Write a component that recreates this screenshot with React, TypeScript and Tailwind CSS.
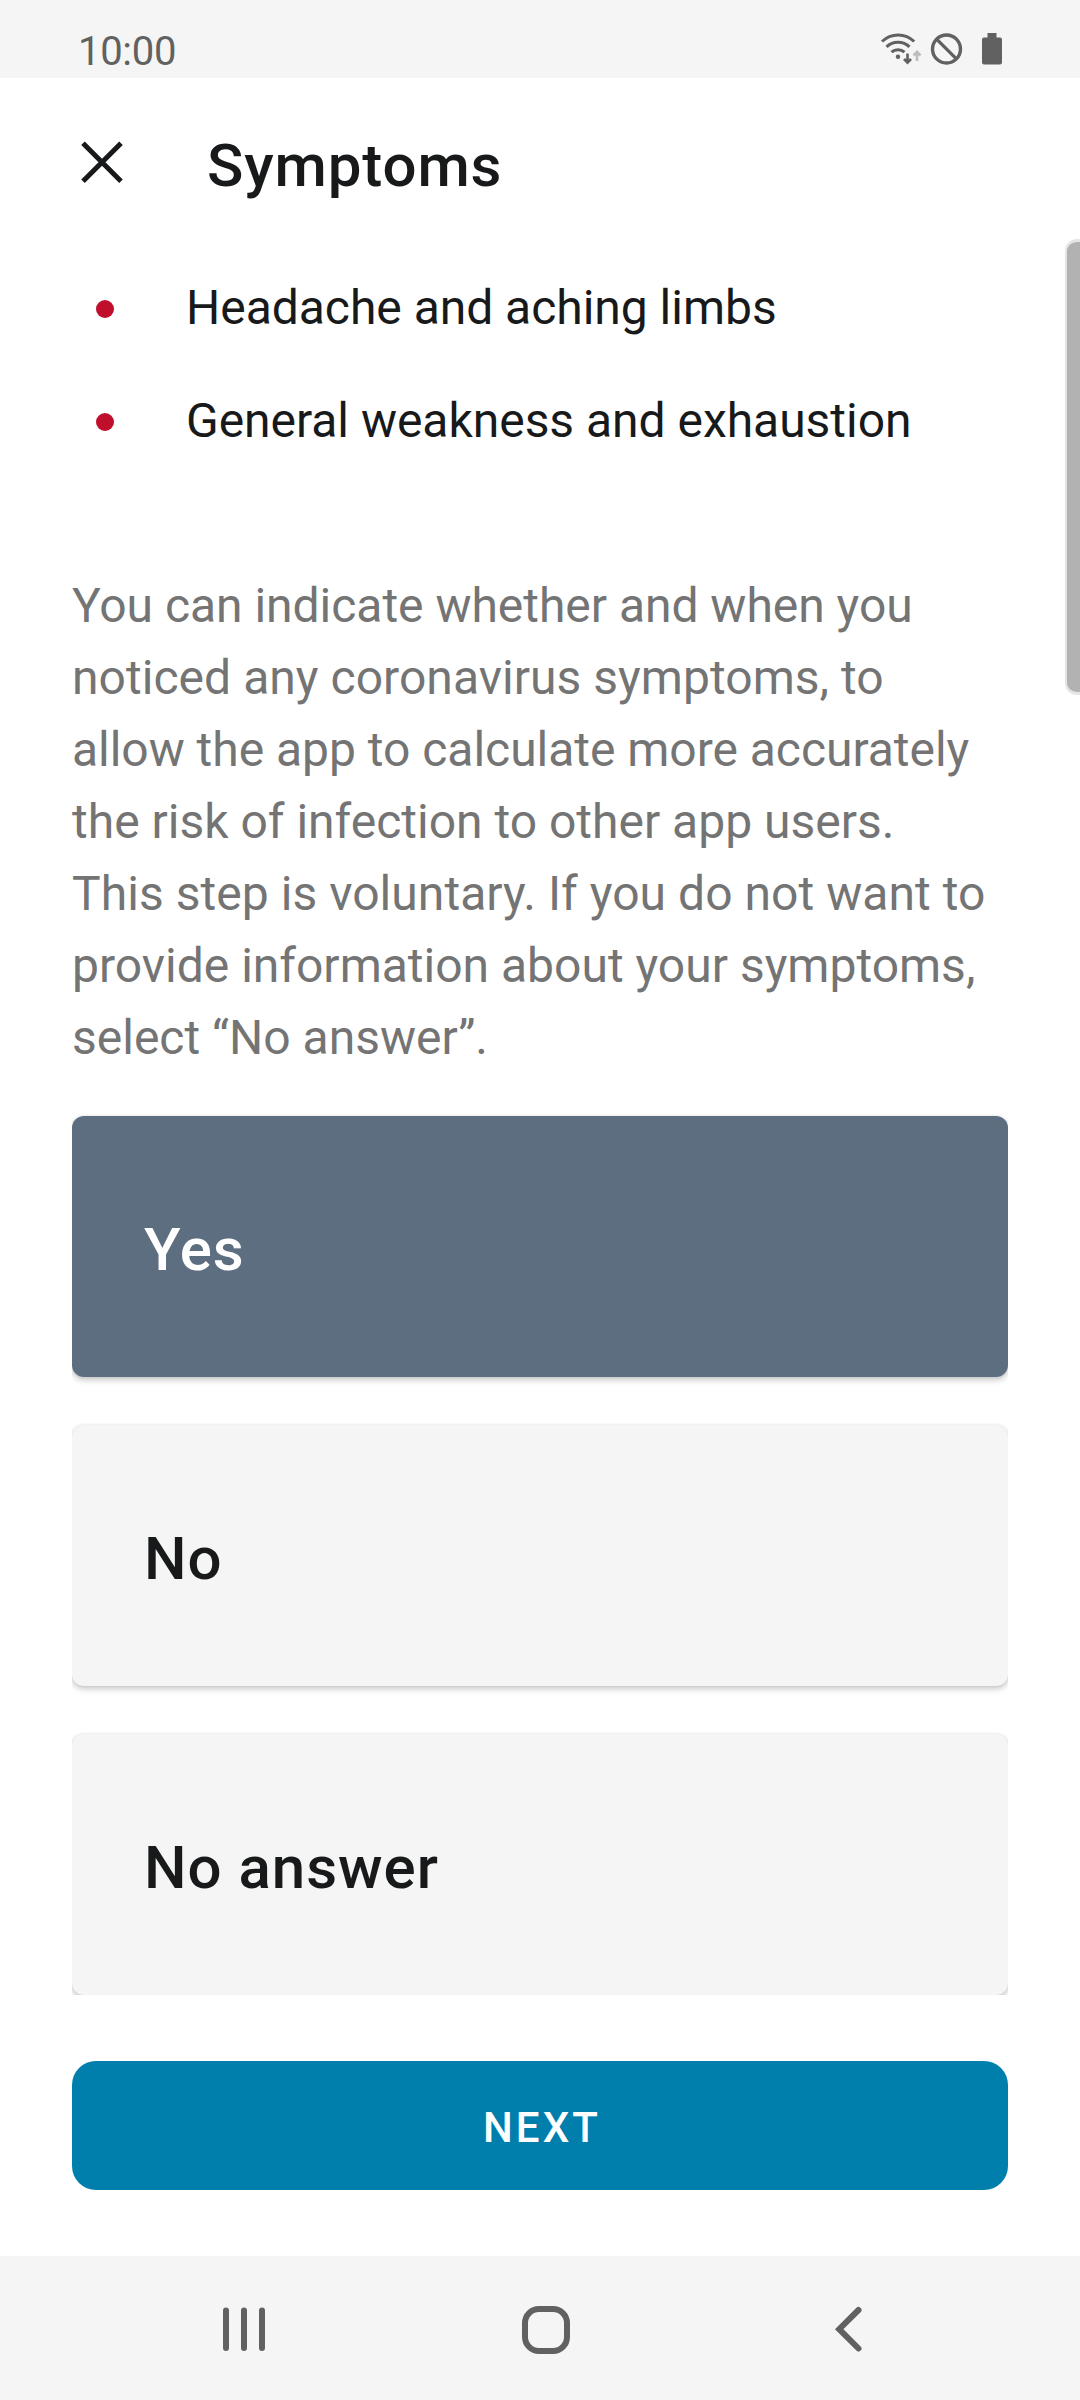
const paragraph = [
  { text: "You can indicate whether and when you", tracking: "tracking-[-0.03px]" },
  { text: "noticed any coronavirus symptoms, to", tracking: "tracking-[0.04px]" },
  { text: "allow the app to calculate more accurately", tracking: "tracking-[-0.03px]" },
  { text: "the risk of infection to other app users.", tracking: "tracking-normal" },
  { text: "This step is voluntary. If you do not want to", tracking: "tracking-[0.05px]" },
  { text: "provide information about your symptoms,", tracking: "tracking-normal" },
  { text: "select “No answer”.", tracking: "tracking-normal" },
];

const symptoms = ["Headache and aching limbs", "General weakness and exhaustion"];

function StatusBar() {
  return (
    <header className="flex h-[78px] shrink-0 items-start justify-between bg-[#f5f5f5] pl-[78px] pr-[78px] text-[#616161]">
      <span className="mt-[28px] text-[40px] leading-[47px] tracking-[-0.3px]">10:00</span>
      <svg className="mt-[33px]" width="122" height="34" viewBox="880 33 122 34" fill="none" stroke="#616161">
        <path d="M882 41.5a23 23 0 0 1 32.200 0M886.500 46.800a16.500 16.500 0 0 1 23 0M891.500 52.200a9.500 9.500 0 0 1 13 0" strokeWidth="3" />
        <circle cx="898" cy="56.800" r="2.200" fill="#616161" stroke="none" />
        <path d="M907.500 53.500v9M904 59l3.500 3.700 3.500-3.700" strokeWidth="2.600" />
        <path d="M917 61v-9M913.500 55.500l3.500-3.700 3.500 3.700" stroke="#bdbdbd" strokeWidth="2.600" />
        <circle cx="946.500" cy="49" r="14" strokeWidth="3.400" />
        <path d="M936.600 39.100l19.800 19.800" strokeWidth="3.400" />
        <path d="M987.500 33h9v4.500h3.500a2 2 0 0 1 2 2v23a2 2 0 0 1-2 2h-16a2 2 0 0 1-2-2v-23a2 2 0 0 1 2-2h3.500z" fill="#616161" stroke="none" />
      </svg>
    </header>
  );
}

function Choice({ label, selected = false, last = false }: { label: string; selected?: boolean; last?: boolean }) {
  return (
    <div className={last ? "overflow-hidden pt-[2px]" : "overflow-hidden pb-[46px] pt-[2px]"}>
      <div
        className={
          "flex h-[261px] items-center rounded-[12px] pl-[72px] pt-[6px] shadow-[0_3px_6px_rgba(0,0,0,0.22),0_0_3px_rgba(0,0,0,0.08)] " +
          (selected ? "bg-[#5d6e80] text-white" : "bg-[#f5f5f5]")
        }
      >
        {label}
      </div>
    </div>
  );
}

export default function App() {
  return (
    <div className="relative flex h-[2400px] w-[1080px] flex-col overflow-hidden bg-white font-['Roboto',sans-serif] text-[#17191a]">
      <StatusBar />
      <div className="flex h-[172px] shrink-0 items-center gap-[84px] pl-[80px]">
        <svg className="-mt-[4px]" width="43" height="42" viewBox="0 0 43 42" stroke="#17191a" strokeWidth="5">
          <path d="M3 2.200l38 38M41 2.200l-38 38" />
        </svg>
        <h1 className="pt-[3px] text-[60px] font-medium leading-[72px] tracking-[0.9px]">Symptoms</h1>
      </div>
      <ul className="flex flex-col gap-[41px] pl-[96px] pt-[22px]">
        {symptoms.map((t) => (
          <li key={t} className="flex h-[72px] items-center gap-[72px] text-[48px] tracking-[-0.03px]">
            <i className="mt-[2px] size-[18px] rounded-full bg-[#c00f2d]" />
            {t}
          </li>
        ))}
      </ul>
      <p className="mt-[113px] pl-[72px] text-[48px] leading-[72px] text-[#747474]">
        {paragraph.map(({ text, tracking }) => (
          <span key={text} className={"block whitespace-nowrap " + tracking}>
            {text}
          </span>
        ))}
      </p>
      <div className="mx-[72px] mt-[40px] text-[60px] font-medium tracking-[0.98px]">
        <Choice label="Yes" selected />
        <Choice label="No" />
        <Choice label="No answer" last />
      </div>
      <button className="mx-[72px] mt-[66px] flex h-[129px] shrink-0 items-center justify-center rounded-[24px] bg-[#007fad] pl-[4px] pt-[4px] text-[42px] font-medium tracking-[3.1px] text-white">
        NEXT
      </button>
      <nav className="mt-auto flex h-[144px] shrink-0 items-center bg-[#f5f5f5]">
        <svg className="ml-[222px] mt-[2px]" width="644" height="50" viewBox="222 2305 644 50" fill="none" stroke="#616161" strokeWidth="6" strokeLinecap="round">
          <path d="M226 2311.500v37.500M244 2311.500v37.500M262 2311.500v37.500" />
          <rect x="525" y="2310" width="42" height="42" rx="14" />
          <path d="M858.500 2311l-19.300 19.200 19.300 19.300" />
        </svg>
      </nav>
      <div className="absolute right-0 top-[239px] h-[456px] w-[15px] rounded-l-[12px] border-y-[3px] border-l-[2px] border-[#e5e5e5] bg-[#b2b2b2]" />
    </div>
  );
}
